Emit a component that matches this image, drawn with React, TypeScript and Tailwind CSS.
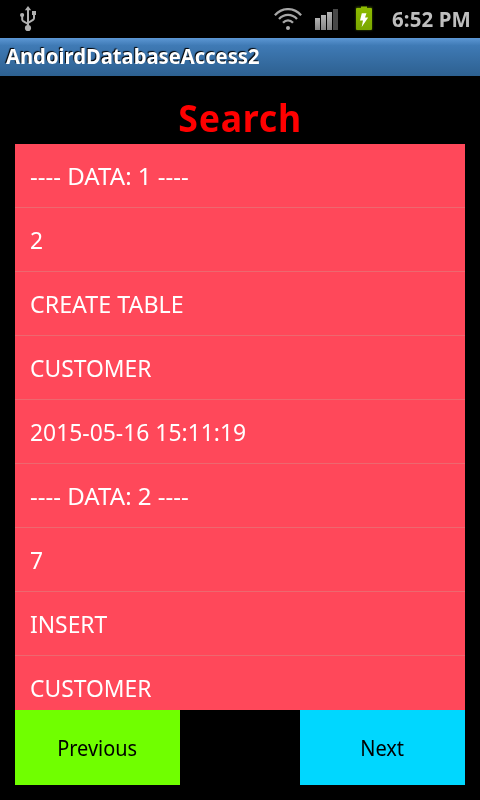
import React from 'react';

const rows: { text: string; fit: string }[] = [
  { text: '---- DATA: 1 ----', fit: 'scale-x-[1.003]' },
  { text: '2', fit: 'scale-x-[0.95]' },
  { text: 'CREATE TABLE', fit: 'scale-x-[0.969]' },
  { text: 'CUSTOMER', fit: 'scale-x-[0.952]' },
  { text: '2015-05-16 15:11:19', fit: 'scale-x-[0.953]' },
  { text: '---- DATA: 2 ----', fit: 'scale-x-[1.003]' },
  { text: '7', fit: 'scale-x-[0.95]' },
  { text: 'INSERT', fit: 'scale-x-[0.952]' },
  { text: 'CUSTOMER', fit: 'scale-x-[0.952]' },
];

function UsbIcon() {
  return (
    <svg width="18" height="26" viewBox="0 0 18 26" fill="none" className="shrink-0">
      <path d="M8 3V22M2.2 10v3.500c0 .8.4 1.200 1 1.600L8 18M14 8v4.200c0 .8-.4 1.200-1 1.600L8 17" stroke="#b0b0b0" strokeWidth="2" />
      <path d="M8 0 11.200 4.300H4.800z" fill="#b0b0b0" />
      <circle cx="2.100" cy="9" r="2.100" fill="#b0b0b0" />
      <rect x="12" y="5" width="4" height="4" fill="#b0b0b0" />
      <circle cx="8" cy="22" r="3.100" fill="#b0b0b0" />
    </svg>
  );
}

function WifiIcon() {
  return (
    <svg width="28" height="24" viewBox="0 0 28 24" fill="none" className="shrink-0">
      <g stroke="#a6a6a6" strokeWidth="2.3">
        <path d="M.9 7.200C8.200-.9 19.800-.9 27.100 7.200" />
        <path d="M5 11C10 5.500 18 5.500 23 11" />
        <path d="M9 14.800C12 11.500 16 11.500 19 14.800" />
      </g>
      <circle cx="14" cy="20" r="2" fill="#b0b0b0" />
    </svg>
  );
}

function SignalIcon() {
  return (
    <svg width="24" height="22" viewBox="0 0 24 22" className="shrink-0">
      <defs>
        <linearGradient id="bars" x1="0" y1="0" x2="0" y2="1">
          <stop offset="0" stopColor="#b4b4b4" />
          <stop offset="1" stopColor="#858585" />
        </linearGradient>
      </defs>
      <rect x="0" y="9" width="5" height="12" fill="url(#bars)" />
      <rect x="6" y="6" width="5" height="15" fill="url(#bars)" />
      <rect x="12" y="3" width="5" height="18" fill="url(#bars)" />
      <rect x="18" y="0" width="5" height="21" fill="#484848" />
    </svg>
  );
}

function BatteryIcon() {
  return (
    <svg width="24" height="32" viewBox="0 0 24 32" className="shrink-0">
      <defs>
        <linearGradient id="cell" x1="0" y1="0" x2="0" y2="1">
          <stop offset="0" stopColor="#8fbc00" />
          <stop offset="1" stopColor="#79a600" />
        </linearGradient>
        <filter id="glow" x="-30%" y="-30%" width="160%" height="160%">
          <feGaussianBlur stdDeviation="1.3" />
        </filter>
      </defs>
      <rect x="4" y="5" width="16" height="23" fill="#6b9500" opacity=".6" filter="url(#glow)" />
      <path d="M9 4.500h6V6h4q1 0 1 1v20q0 1-1 1H5q-1 0-1-1V7q0-1 1-1h4z" fill="url(#cell)" />
      <path d="M9.800 11.300h4.700L13 15.500h3.200L9.700 25l1.300-6.500H8z" fill="#fff" />
    </svg>
  );
}

export default function App() {
  return (
    <div className="flex h-[800px] w-[480px] flex-col overflow-hidden bg-black font-['Noto_Sans','Open_Sans',sans-serif]">
      <header className="flex h-[38px] shrink-0 items-start">
        <div className="ml-5 mt-[6px]"><UsbIcon /></div>
        <div className="ml-[236px] mt-[8px]"><WifiIcon /></div>
        <div className="ml-[13px] mt-[9px]"><SignalIcon /></div>
        <div className="ml-[13px] mt-[2px]"><BatteryIcon /></div>
        <div className="ml-4 mt-[5px] w-[79px] text-[21px] leading-[29px] font-bold whitespace-nowrap text-[#bebebe]">
          <span className="inline-block origin-left scale-x-[0.975] tracking-[0.1px]">6:52 PM</span>
        </div>
      </header>
      <div className="h-[38px] shrink-0 bg-linear-to-b from-[#5c97d4] via-[#3f7ab5] via-20% to-[#2d6090] pl-1.5 text-[21px] leading-[37px] font-bold text-white [text-shadow:-1px_-1px_1px_#000]">
        <span className="inline-block origin-left scale-x-[0.962]">AndoirdDatabaseAccess2</span>
      </div>
      <main className="flex min-h-0 flex-1 flex-col px-[15px] pb-[15px]">
        <h1 className="h-[68px] shrink-0 pt-[16px] text-center text-[37.5px] leading-[51px] font-bold text-[#ff0000]">
          <span className="inline-block scale-x-[0.95] tracking-[0.8px]">Search</span>
        </h1>
        <ul className="h-[566px] shrink-0 overflow-hidden bg-[#ff485a] text-2xl text-white">
          {rows.map((r, i) => (
            <li key={i} className="h-16 border-b border-[#ed686f] pl-[15px] leading-[64px] whitespace-nowrap">
              <span className={`inline-block origin-left ${r.fit}`}>{r.text}</span>
            </li>
          ))}
        </ul>
        <div className="flex h-[75px] shrink-0 justify-between text-[22px] leading-[75px] text-black">
          <button className="w-[165px] bg-[#70ff00]"><span className="inline-block scale-x-[0.905]">Previous</span></button>
          <button className="w-[165px] bg-[#00d7ff]"><span className="inline-block scale-x-[0.91]">Next</span></button>
        </div>
      </main>
    </div>
  );
}
